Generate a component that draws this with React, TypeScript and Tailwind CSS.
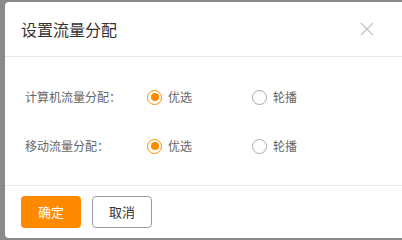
import React from "react";

function Radio({ checked, label }: { checked: boolean; label: string }) {
  return (
    <div className="flex items-center w-[105px] h-[20px]">
      <span
        className={
          checked
            ? "w-[15px] h-[15px] rounded-full border border-[#ff8a00] flex items-center justify-center bg-white"
            : "w-[15px] h-[15px] rounded-full border border-[#aaaaaa] bg-white"
        }
      >
        {checked && <span className="w-[8px] h-[8px] rounded-full bg-[#ff8a00]" />}
      </span>
      <span className="ml-[6px] text-[12px] text-[#666666] leading-[20px]">{label}</span>
    </div>
  );
}

function Row({ label, }: { label: string }) {
  return (
    <div className="flex items-center h-[20px] pl-[20px]">
      <div className="w-[122px] text-[12px] text-[#666666] leading-[20px] whitespace-nowrap">{label}</div>
      <Radio checked label="优选" />
      <Radio checked={false} label="轮播" />
    </div>
  );
}

export default function App() {
  return (
    <div
      className="w-[402px] h-[240px] overflow-hidden bg-[#8a8a8a] pl-[5px] pt-[2px]"
      style={{ fontFamily: '"Noto Sans CJK SC", "Noto Sans", sans-serif' }}
    >
      <div className="w-[420px] h-[236px] bg-white rounded-l-[4px] flex flex-col">
        <div className="h-[55px] shrink-0 border-b border-[#e8e8e8] flex items-center pl-[16px] pr-[48px] justify-between">
          <span className="text-[16px] text-[#333333]">设置流量分配</span>
          <svg width="14" height="14" viewBox="0 0 14 14" className="mr-[3px]">
            <path d="M1 1 L13 13 M13 1 L1 13" stroke="#c4c4c4" strokeWidth="1.3" />
          </svg>
        </div>
        <div className="flex flex-col pt-[30px] pb-[29px] gap-[29px] border-b border-[#e8e8e8]">
          <Row label="计算机流量分配：" />
          <Row label="移动流量分配：" />
        </div>
        <div className="flex items-start pt-[10px] pl-[16px] gap-[11px]">
          <button className="w-[60px] h-[32px] rounded-[4px] bg-[#ff8a00] text-white text-[13px]">确定</button>
          <button className="w-[60px] h-[32px] rounded-[4px] border border-[#9a9aa4] text-[#333333] text-[13px] bg-white">取消</button>
        </div>
      </div>
    </div>
  );
}
